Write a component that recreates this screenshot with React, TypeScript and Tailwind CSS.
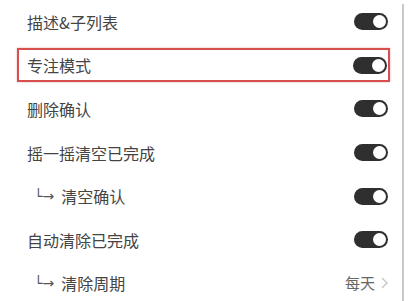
import type { ReactNode } from 'react';

type Row = {
  label: string;
  sub?: boolean;
  value?: string;
  focused?: boolean;
};

const ROWS: Row[] = [
  { label: '描述&子列表' },
  { label: '专注模式', focused: true },
  { label: '删除确认' },
  { label: '摇一摇清空已完成' },
  { label: '清空确认', sub: true },
  { label: '自动清除已完成' },
  { label: '清除周期', sub: true, value: '每天' },
];

/** Dark pill switch, always on in this screen. */
function Toggle() {
  return (
    <span className="flex h-[17px] w-[34px] items-center justify-end rounded-full bg-[#2f2f2f] p-[2px]">
      <span className="h-[13px] w-[13px] rounded-full bg-white" />
    </span>
  );
}

function RowContent({ row }: { row: Row }) {
  return (
    <>
      <span className="flex items-center text-[16px] text-[#444]">
        {row.sub && (
          <span className="mr-[7px] ml-[7px] text-[14px] text-[#555]" style={{ fontFamily: '"DejaVu Sans", sans-serif' }}>
            └→
          </span>
        )}
        {row.label}
      </span>
      {row.value ? (
        <span className="flex items-center gap-[6px] text-[15px] text-[#666]">
          {row.value}
          <svg width="7" height="12" viewBox="0 0 7 12" fill="none">
            <path d="M1 1l5 5-5 5" stroke="#c4c4c4" strokeWidth="1.3" />
          </svg>
        </span>
      ) : (
        <Toggle />
      )}
    </>
  );
}

function SettingRow({ row }: { row: Row }): ReactNode {
  if (row.focused) {
    return (
      <div className="flex h-[43.6px] items-center pl-[17px] pr-[12px]">
        <div className="flex h-[34px] flex-1 items-center justify-between border-2 border-[#d65050] pl-[8px] pr-[1px] shadow-[0_0_2px_rgba(214,80,80,0.45)]">
          <RowContent row={row} />
        </div>
      </div>
    );
  }
  return (
    <div className="flex h-[43.6px] items-center justify-between pl-[27px] pr-[14px]">
      <RowContent row={row} />
    </div>
  );
}

export default function App() {
  return (
    <div
      className="flex h-[301px] w-[414px] overflow-hidden bg-white"
      style={{ fontFamily: '"Noto Sans CJK SC", "Noto Sans", sans-serif' }}
    >
      <div className="w-[402px]">
        {ROWS.map((row) => (
          <SettingRow key={row.label} row={row} />
        ))}
      </div>
      <div className="mt-[4px] w-[2px] bg-[#c8c8c8]" />
    </div>
  );
}
